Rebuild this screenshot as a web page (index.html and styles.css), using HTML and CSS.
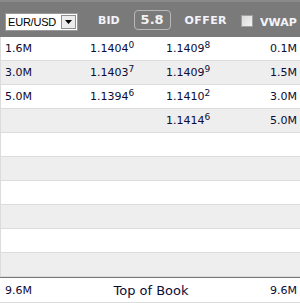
FILE: index.html
```html
<!DOCTYPE html>
<html>
<head>
  <link rel="stylesheet" href="styles.css">
</head>
<body>
  <div class="ladder">
    <div class="head">
      <div class="pair">
        <span class="pair-text">EUR/USD</span>
        <span class="pair-arrow"><svg width="7" height="4" viewBox="0 0 7 4"><path d="M0 0h7L3.5 4z" fill="#000"/></svg></span>
      </div>
      <div class="label bid-label">BID</div>
      <div class="spread">5.8</div>
      <div class="label offer-label">OFFER</div>
      <div class="check"></div>
      <div class="label vwap-label">VWAP</div>
    </div>

    <div class="rows">
      <div class="row">
        <span class="size">1.6M</span>
        <span class="price">1.1404<sup>0</sup></span>
        <span class="price">1.1409<sup>8</sup></span>
        <span class="size right">0.1M</span>
      </div>
      <div class="row">
        <span class="size">3.0M</span>
        <span class="price">1.1403<sup>7</sup></span>
        <span class="price">1.1409<sup>9</sup></span>
        <span class="size right">1.5M</span>
      </div>
      <div class="row">
        <span class="size">5.0M</span>
        <span class="price">1.1394<sup>6</sup></span>
        <span class="price">1.1410<sup>2</sup></span>
        <span class="size right">3.0M</span>
      </div>
      <div class="row">
        <span class="size"></span>
        <span class="price"></span>
        <span class="price">1.1414<sup>6</sup></span>
        <span class="size right">5.0M</span>
      </div>
      <div class="row"></div>
      <div class="row"></div>
      <div class="row"></div>
      <div class="row"></div>
      <div class="row"></div>
      <div class="row"></div>
    </div>

    <div class="foot">
      <span class="size">9.6M</span>
      <span class="foot-title">Top of Book</span>
      <span class="size right">9.6M</span>
    </div>
  </div>
</body>
</html>
```

FILE: styles.css
```css
* {
  margin: 0;
  padding: 0;
  box-sizing: border-box;
}

body {
  background: #fff;
  font-family: "DejaVu Sans", Verdana, sans-serif;
  color: #0c0c36;
  overflow: hidden;
}

.ladder {
  width: 300px;
  height: 303px;
}

.head {
  height: 37px;
  background: #7a7a7a;
  border-top: 2px solid #8a8a8a;
  display: flex;
  align-items: center;
  padding-left: 5px;
}

.pair {
  width: 73px;
  height: 18px;
  background: #fff;
  border: 1px solid #9a9a9a;
  display: flex;
  align-items: center;
  padding-left: 2px;
  margin-top: 4px;
}

.pair-text {
  flex: 1;
  font-family: "Liberation Sans", Arial, sans-serif;
  font-size: 11px;
  letter-spacing: -0.2px;
  color: #000;
}

.pair-arrow {
  width: 15px;
  height: 14px;
  margin-right: 1px;
  border: 1px solid #8f8f8f;
  background: #ececec;
  display: flex;
  align-items: center;
  justify-content: center;
}

.label {
  font-size: 11px;
  font-weight: bold;
  color: #f2f4fa;
  margin-top: 2px;
}

.bid-label {
  margin-left: 20px;
}

.spread {
  margin-left: 14px;
  width: 37px;
  height: 20px;
  border: 1px solid #b8b8b8;
  border-radius: 4px;
  color: #f2f2f2;
  font-size: 13px;
  font-weight: bold;
  display: flex;
  align-items: center;
  justify-content: center;
}

.offer-label {
  margin-left: 14px;
  letter-spacing: 0.4px;
}

.check {
  margin-left: 14px;
  margin-top: 2px;
  width: 12px;
  height: 12px;
  border: 1px solid #a0a0a0;
  background: linear-gradient(135deg, #d8d8d8, #f4f4f4);
}

.vwap-label {
  margin-left: 7px;
  margin-top: 6px;
}

.rows {
  border-left: 1px solid #dcdcdc;
}

.row {
  height: 24px;
  border-bottom: 1px solid #dcdcdc;
  display: grid;
  grid-template-columns: 85px 76px 1fr auto;
  align-items: center;
  padding: 0 3px 0 4px;
  font-size: 11px;
}

.row:nth-child(even) {
  background: #eeeeee;
}

.price sup {
  font-size: 9px;
  vertical-align: 4px;
  line-height: 0;
}

.right {
  text-align: right;
}

.foot {
  height: 26px;
  border-top: 1px solid #777;
  border-bottom: 1px solid #dcdcdc;
  display: grid;
  grid-template-columns: 1fr auto 1fr;
  align-items: center;
  padding: 0 3px 0 5px;
  font-size: 11px;
}

.foot-title {
  font-size: 13px;
}
```
